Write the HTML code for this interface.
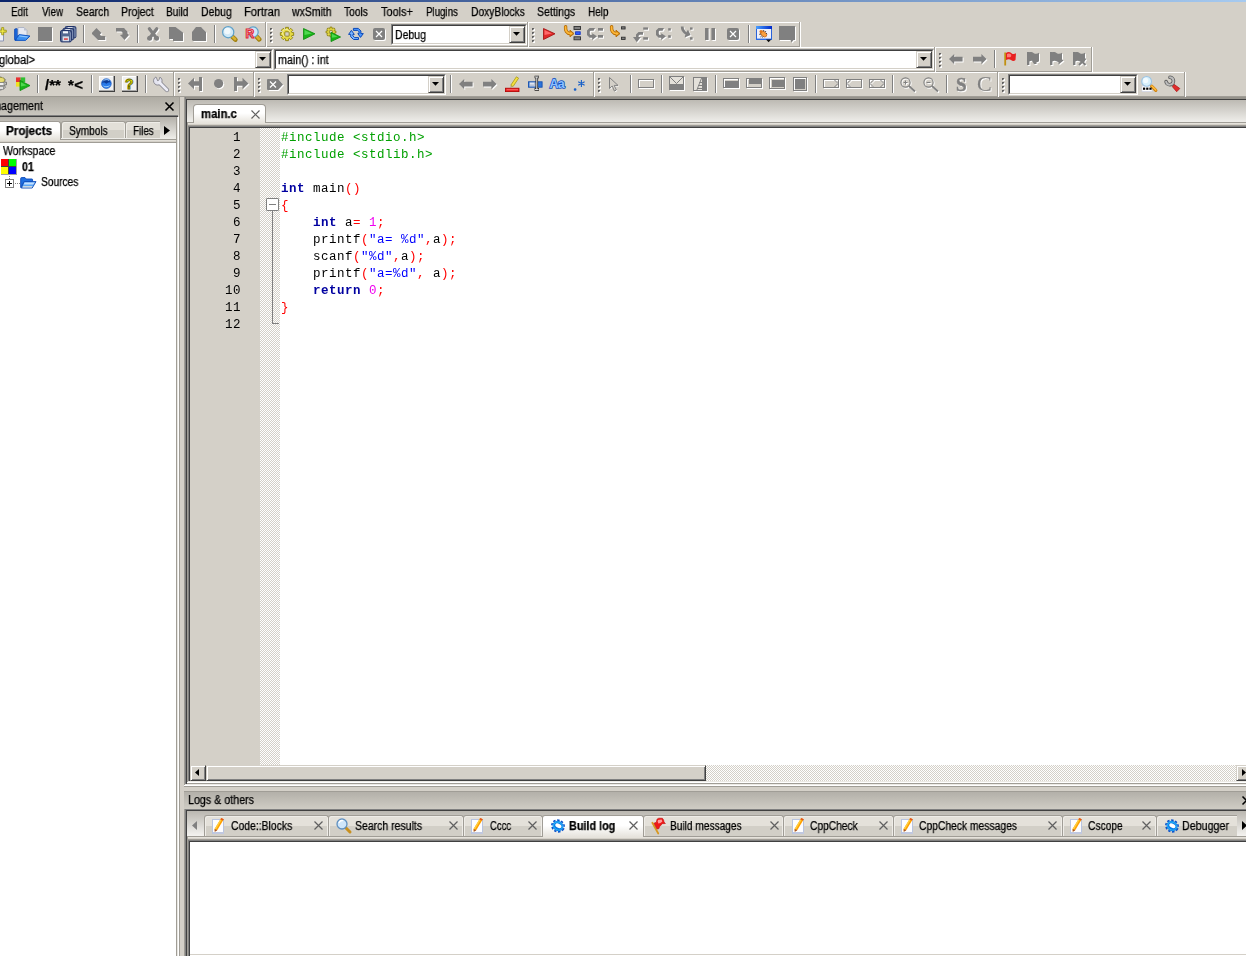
<!DOCTYPE html>
<html><head><meta charset="utf-8">
<style>
html,body{margin:0;padding:0;}
html{overflow:hidden;}
body{width:1246px;height:956px;overflow:hidden;background:#d4d0c8;position:relative;font-family:"Liberation Sans",sans-serif;font-size:11px;color:#000;}
.a{position:absolute;}
.t{-webkit-text-stroke:0.25px #000;will-change:transform;position:absolute;white-space:nowrap;line-height:13px;height:13px;}
.b{font-weight:bold;}
.sep{position:absolute;width:1px;height:20px;background:#808080;border-right:1px solid #fff;}
.grip{position:absolute;width:3px;height:16px;background:repeating-linear-gradient(to bottom,#808080 0,#808080 1px,#fff 1px,#fff 2px,#d4d0c8 2px,#d4d0c8 3px);}
.tbend{position:absolute;width:1px;background:#808080;border-right:1px solid #fff;}
.combo{position:absolute;background:#fff;border:2px solid;border-color:#404040 #d4d0c8 #d4d0c8 #404040;outline:1px solid;outline-color:#808080;box-sizing:border-box;}
.code{will-change:transform;position:absolute;left:281px;font-family:"Liberation Mono",monospace;font-size:12.5px;letter-spacing:0.5px;line-height:17px;height:17px;white-space:pre;}
.ln{will-change:transform;position:absolute;left:190px;width:51px;text-align:right;font-family:"Liberation Mono",monospace;font-size:12.5px;letter-spacing:0.5px;line-height:17px;height:17px;}
.g{color:#00a000}.k{color:#0000a0;font-weight:bold}.r{color:#ff0000}.s{color:#0000ff}.n{color:#f000f0}
svg{position:absolute;overflow:visible}
.sb{background:#d4d0c8;box-sizing:border-box;border:1px solid;border-color:#d4d0c8 #404040 #404040 #d4d0c8;box-shadow:inset 1px 1px 0 #fff,inset -1px -1px 0 #808080}
</style></head><body>

<!-- title bar bottom -->
<div class="a" style="left:0;top:0;width:1246px;height:2px;background:linear-gradient(to right,#0a246a,#a6caf0)"></div>

<!-- MENU -->
<div id="menu">
<span class="t" style="left:11.30px;top:6px;font-size:12px;transform-origin:0 0;transform:scaleX(0.820)">Edit</span>
<span class="t" style="left:41.90px;top:6px;font-size:12px;transform-origin:0 0;transform:scaleX(0.815)">View</span>
<span class="t" style="left:75.80px;top:6px;font-size:12px;transform-origin:0 0;transform:scaleX(0.873)">Search</span>
<span class="t" style="left:120.70px;top:6px;font-size:12px;transform-origin:0 0;transform:scaleX(0.876)">Project</span>
<span class="t" style="left:166.40px;top:6px;font-size:12px;transform-origin:0 0;transform:scaleX(0.838)">Build</span>
<span class="t" style="left:200.80px;top:6px;font-size:12px;transform-origin:0 0;transform:scaleX(0.871)">Debug</span>
<span class="t" style="left:243.50px;top:6px;font-size:12px;transform-origin:0 0;transform:scaleX(0.934)">Fortran</span>
<span class="t" style="left:292.37px;top:6px;font-size:12px;transform-origin:0 0;transform:scaleX(0.872)">wxSmith</span>
<span class="t" style="left:344.10px;top:6px;font-size:12px;transform-origin:0 0;transform:scaleX(0.850)">Tools</span>
<span class="t" style="left:381.00px;top:6px;font-size:12px;transform-origin:0 0;transform:scaleX(0.911)">Tools+</span>
<span class="t" style="left:426.00px;top:6px;font-size:12px;transform-origin:0 0;transform:scaleX(0.811)">Plugins</span>
<span class="t" style="left:470.50px;top:6px;font-size:12px;transform-origin:0 0;transform:scaleX(0.857)">DoxyBlocks</span>
<span class="t" style="left:537.00px;top:6px;font-size:12px;transform-origin:0 0;transform:scaleX(0.881)">Settings</span>
<span class="t" style="left:587.50px;top:6px;font-size:12px;transform-origin:0 0;transform:scaleX(0.828)">Help</span>
</div>

<!-- TOOLBAR ROW 1 placeholder -->
<div id="tb1">
<div class="a" style="left:0;top:22px;width:800px;height:1px;background:#fff"></div>
<div class="a" style="left:0;top:46px;width:800px;height:1px;background:#a09d96"></div>
<svg style="left:-10px;top:26px" width="17" height="16" viewBox="0 0 17 16"><path d="M2 2.5 L10 2.5 L13.5 6 L13.5 15 L2 15 Z" fill="#eef0f8" stroke="#8c96b4"/><path d="M11.7 1.6 h2 v2.6 h2.6 v2 h-2.6 v2.6 h-2 v-2.6 h-2.6 v-2 h2.6 z" fill="#f0e848" stroke="#98900c" stroke-width="0.8"/></svg>
<svg style="left:14px;top:26px" width="17" height="16" viewBox="0 0 17 16"><path d="M0.6 3.2 L2.2 2.6 L3.8 3.2 L3.8 13.6 L0.6 13.6 Z" fill="#1c66d8" stroke="#0c44b0" stroke-width="0.8"/><path d="M4 1.5 L10 1.5 L13 4.5 L13 9.5 L4 9.5 Z" fill="#e6e9f2" stroke="#a4acc0" stroke-width="0.8"/><path d="M10 1.5 L10 4.5 L13 4.5 Z" fill="#bcc2d0"/><path d="M1 14.4 L5.2 8.6 L16 10 L11.6 14.4 Z" fill="#3c90f0" stroke="#0c50c0" stroke-width="0.9" stroke-linejoin="round"/><path d="M5.6 9.4 L14 10.4 L13 11.4 L5 10.4 Z" fill="#90c8ff"/><path d="M0.6 13.6 L3.8 13.6 L1.2 14.4 Z" fill="#0c44b0"/></svg>
<svg style="left:38px;top:27px" width="16" height="16" viewBox="0 0 16 16"><rect x="1" y="1" width="14" height="14" fill="#fff"/><rect x="0" y="0" width="14" height="14" fill="#808080"/></svg>
<svg style="left:60px;top:26px" width="17" height="17" viewBox="0 0 17 17"><g transform="translate(4.6,0)"><rect x="0.5" y="0.5" width="10.8" height="11.4" rx="1.4" fill="#53678f" stroke="#22346a"/><rect x="3" y="1.2" width="5" height="2.2" fill="#f4f6fc"/><path d="M9 1.5 L10.4 2.6 L10.4 10.8" stroke="#8c9cc0" stroke-width="0.9" fill="none"/></g><g transform="translate(2.3,2)"><rect x="0.5" y="0.5" width="10.8" height="11.4" rx="1.4" fill="#53678f" stroke="#22346a"/><rect x="3" y="1.2" width="5" height="2.2" fill="#f4f6fc"/><path d="M9 1.5 L10.4 2.6 L10.4 10.8" stroke="#8c9cc0" stroke-width="0.9" fill="none"/></g><g transform="translate(0,4)"><rect x="0.5" y="0.5" width="10.8" height="11.4" rx="1.4" fill="#53678f" stroke="#22346a"/><rect x="3" y="1.2" width="5" height="2.2" fill="#f4f6fc"/><path d="M9 1.5 L10.4 2.6 L10.4 10.8" stroke="#8c9cc0" stroke-width="0.9" fill="none"/></g><rect x="2.6" y="10.4" width="6.4" height="4.8" fill="#d8dce8"/><rect x="4" y="12.4" width="3.8" height="1.3" fill="#e02020"/></svg>
<div class="a" style="left:83px;top:25px;width:1px;height:18px;background:#808080"></div><div class="a" style="left:84px;top:25px;width:1px;height:18px;background:#fff"></div>
<svg style="left:92px;top:28px" width="16" height="15" viewBox="0 0 16 15"><g transform="translate(1,1)" fill="#fff" stroke="#fff"><path d="M4.5 0 L9.6 5 L7.8 6.6 L9.2 8 L13.2 8 L13.2 12 L6 12 L0 6 L0 4.8 Z" stroke="none"/></g><g fill="#808080" stroke="#808080"><path d="M4.5 0 L9.6 5 L7.8 6.6 L9.2 8 L13.2 8 L13.2 12 L6 12 L0 6 L0 4.8 Z" stroke="none"/></g></svg>
<svg style="left:116px;top:28px" width="16" height="15" viewBox="0 0 16 15"><g transform="translate(1,1)" fill="#fff" stroke="#fff"><path d="M0 0 L8 0 L11.5 3.5 L11.5 5.5 L13 7 L8.5 12 L4 7 L6.5 6.5 L6.5 4.6 L5.4 3.5 L0 3.5 Z" stroke="none"/></g><g fill="#808080" stroke="#808080"><path d="M0 0 L8 0 L11.5 3.5 L11.5 5.5 L13 7 L8.5 12 L4 7 L6.5 6.5 L6.5 4.6 L5.4 3.5 L0 3.5 Z" stroke="none"/></g></svg>
<div class="a" style="left:137px;top:25px;width:1px;height:18px;background:#808080"></div><div class="a" style="left:138px;top:25px;width:1px;height:18px;background:#fff"></div>
<svg style="left:147px;top:27px" width="15" height="16" viewBox="0 0 15 16"><g transform="translate(1,1)" fill="#fff" stroke="#fff"><path d="M2.4 1.8 L9.8 11.5 M9.8 1.8 L2.4 11.5" stroke-width="3.3" stroke-linecap="round" fill="none"/><circle cx="2.6" cy="11.2" r="2.5" stroke="none"/><circle cx="9.6" cy="11.2" r="2.5" stroke="none"/></g><g fill="#808080" stroke="#808080"><path d="M2.4 1.8 L9.8 11.5 M9.8 1.8 L2.4 11.5" stroke-width="3.3" stroke-linecap="round" fill="none"/><circle cx="2.6" cy="11.2" r="2.5" stroke="none"/><circle cx="9.6" cy="11.2" r="2.5" stroke="none"/></g></svg>
<svg style="left:169px;top:27px" width="16" height="16" viewBox="0 0 16 16"><g transform="translate(1,1)" fill="#fff" stroke="#fff"><path d="M0 0 L6.5 0 L14 5.5 L14 14 L4 14 L4 12 L0 12 Z" stroke="none"/></g><g fill="#808080" stroke="#808080"><path d="M0 0 L6.5 0 L14 5.5 L14 14 L4 14 L4 12 L0 12 Z" stroke="none"/></g></svg>
<svg style="left:192px;top:27px" width="16" height="16" viewBox="0 0 16 16"><g transform="translate(1,1)" fill="#fff" stroke="#fff"><path d="M0 5 L4 0 L9 0 L14 5 L14 14 L1 14 L0 13 Z" stroke="none"/></g><g fill="#808080" stroke="#808080"><path d="M0 5 L4 0 L9 0 L14 5 L14 14 L1 14 L0 13 Z" stroke="none"/></g></svg>
<div class="a" style="left:214px;top:25px;width:1px;height:18px;background:#808080"></div><div class="a" style="left:215px;top:25px;width:1px;height:18px;background:#fff"></div>
<svg style="left:222px;top:26px" width="16" height="16" viewBox="0 0 16 16"><path d="M10.2 10.6 L13.4 13.6" stroke="#a08010" stroke-width="4.6" stroke-linecap="round"/><path d="M10.2 10.4 L13.2 13.2" stroke="#d8b030" stroke-width="2.6" stroke-linecap="round"/><circle cx="6.2" cy="6.2" r="5.6" fill="#d0e8f6" stroke="#5fa0c8" stroke-width="1.2"/><circle cx="5.4" cy="5" r="3.2" fill="#f0f8fc"/></svg>
<svg style="left:245px;top:26px" width="17" height="16" viewBox="0 0 17 16"><path d="M11.6 10.6 L14.2 13.4" stroke="#a08010" stroke-width="4.6" stroke-linecap="round"/><path d="M11.6 10.4 L14 13" stroke="#d8b030" stroke-width="2.6" stroke-linecap="round"/><circle cx="8" cy="6" r="5.2" fill="#d0e8f6" stroke="#5fa0c8" stroke-width="1.2"/><text x="0.6" y="11.6" font-family="Liberation Sans" font-weight="bold" font-size="12" fill="#ffd8d8" stroke="#e02838" stroke-width="1.1">R</text></svg>
<div class="a" style="left:265px;top:22px;width:1px;height:25px;background:#a09d96"></div><div class="a" style="left:266px;top:22px;width:1px;height:25px;background:#fff"></div>
<div class="a" style="left:271px;top:29px;width:2px;height:2px;background:#fff"></div><div class="a" style="left:270px;top:28px;width:2px;height:2px;background:#606060"></div><div class="a" style="left:271px;top:29px;width:1px;height:1px;background:#b0b0b0"></div><div class="a" style="left:271px;top:33px;width:2px;height:2px;background:#fff"></div><div class="a" style="left:270px;top:32px;width:2px;height:2px;background:#606060"></div><div class="a" style="left:271px;top:33px;width:1px;height:1px;background:#b0b0b0"></div><div class="a" style="left:271px;top:37px;width:2px;height:2px;background:#fff"></div><div class="a" style="left:270px;top:36px;width:2px;height:2px;background:#606060"></div><div class="a" style="left:271px;top:37px;width:1px;height:1px;background:#b0b0b0"></div><div class="a" style="left:271px;top:41px;width:2px;height:2px;background:#fff"></div><div class="a" style="left:270px;top:40px;width:2px;height:2px;background:#606060"></div><div class="a" style="left:271px;top:41px;width:1px;height:1px;background:#b0b0b0"></div>
<svg style="left:280px;top:27px" width="14" height="14" viewBox="0 0 14 14"><path d="M13.65 5.57 L13.65 8.43 L11.90 8.42 L11.47 9.46 L12.71 10.69 L10.69 12.71 L9.46 11.47 L8.42 11.90 L8.43 13.65 L5.57 13.65 L5.58 11.90 L4.54 11.47 L3.31 12.71 L1.29 10.69 L2.53 9.46 L2.10 8.42 L0.35 8.43 L0.35 5.57 L2.10 5.58 L2.53 4.54 L1.29 3.31 L3.31 1.29 L4.54 2.53 L5.58 2.10 L5.57 0.35 L8.43 0.35 L8.42 2.10 L9.46 2.53 L10.69 1.29 L12.71 3.31 L11.47 4.54 L11.90 5.58 Z" fill="#e6da44" stroke="#8c8010" stroke-width="0.9" stroke-linejoin="round"/><circle cx="6.0" cy="5.8" r="3.6" fill="none" stroke="#f6f0a0" stroke-width="1"/><rect x="4.8" y="4.8" width="4.4" height="4.4" rx="0.8" fill="#d4d0c8" stroke="#8c8010" stroke-width="0.9"/></svg>
<svg style="left:303px;top:28px" width="13" height="12" viewBox="0 0 13 12"><path d="M0.5 0.5 L12 5.8 L0.5 11.5 Z" fill="#18b418" stroke="#0c8c0c" stroke-width="0.8" stroke-linejoin="round"/><path d="M1.5 2 L9 5.6 L1.5 7 Z" fill="#50d850"/></svg>
<svg style="left:326px;top:27px" width="16" height="15" viewBox="0 0 16 15"><path d="M9.89 3.95 L9.89 6.05 L8.46 6.00 L8.15 6.73 L9.20 7.71 L7.71 9.20 L6.73 8.15 L6.00 8.46 L6.05 9.89 L3.95 9.89 L4.00 8.46 L3.27 8.15 L2.29 9.20 L0.80 7.71 L1.85 6.73 L1.54 6.00 L0.11 6.05 L0.11 3.95 L1.54 4.00 L1.85 3.27 L0.80 2.29 L2.29 0.80 L3.27 1.85 L4.00 1.54 L3.95 0.11 L6.05 0.11 L6.00 1.54 L6.73 1.85 L7.71 0.80 L9.20 2.29 L8.15 3.27 L8.46 4.00 Z" fill="#e6da44" stroke="#8c8010" stroke-width="0.9" stroke-linejoin="round"/><circle cx="5" cy="5" r="1.8" fill="#d4d0c8" stroke="#8c8010" stroke-width="0.8"/><path d="M5 5.2 L14.6 10 L5 14.6 Z" fill="#18b418" stroke="#0c8c0c" stroke-width="0.8" stroke-linejoin="round"/><path d="M5.8 6.8 L11.6 9.8 L5.8 10.8 Z" fill="#50d850"/></svg>
<svg style="left:348px;top:27px" width="16" height="13" viewBox="0 0 16 13"><path d="M5.4 1.4 L10.3 1.4 L12.9 4 L12.9 6.6 L15.3 6.6 L12.5 10.4 L9.8 6.6 L11 6.6 L11 4.8 L9.6 3.4 L5.4 3.4 Z" fill="#4c98ff" stroke="#0a48b8" stroke-width="1" stroke-linejoin="round"/><path d="M3.4 3.4 L6.3 7.4 L4.9 7.4 L4.9 8.8 L6.6 10.6 L10.5 10.6 L10.5 12.5 L5.6 12.5 L2.7 9.8 L2.7 7.4 L0.6 7.4 Z" fill="#78b4ff" stroke="#0a48b8" stroke-width="1" stroke-linejoin="round"/></svg>
<svg style="left:373px;top:28px" width="13" height="13" viewBox="0 0 13 13"><rect x="1" y="1" width="12" height="12" rx="2" fill="#fff"/><rect x="0" y="0" width="12" height="12" rx="2" fill="#808080"/><path d="M3 3 L9 9 M9 3 L3 9" stroke="#fff" stroke-width="1.2"/></svg>
<div class="a" style="left:391px;top:24px;width:136px;height:21px;box-sizing:border-box;background:#fff;border:1px solid;border-color:#808080 #fff #fff #808080"></div><div class="a" style="left:392px;top:25px;width:134px;height:19px;box-sizing:border-box;background:#fff;border:1px solid;border-color:#404040 #d4d0c8 #d4d0c8 #404040"></div><div class="a sb" style="left:509px;top:26px;width:16px;height:17px"></div><svg style="left:513px;top:32px" width="7" height="4" viewBox="0 0 7 4"><path d="M0 0 L7 0 L3.5 3.8 Z" fill="#000"/></svg><span class="t" style="left:394.60px;top:29px;font-size:12px;transform-origin:0 0;transform:scaleX(0.876)">Debug</span>
<div class="a" style="left:527px;top:22px;width:1px;height:25px;background:#a09d96"></div><div class="a" style="left:528px;top:22px;width:1px;height:25px;background:#fff"></div>
<div class="a" style="left:533px;top:29px;width:2px;height:2px;background:#fff"></div><div class="a" style="left:532px;top:28px;width:2px;height:2px;background:#606060"></div><div class="a" style="left:533px;top:29px;width:1px;height:1px;background:#b0b0b0"></div><div class="a" style="left:533px;top:33px;width:2px;height:2px;background:#fff"></div><div class="a" style="left:532px;top:32px;width:2px;height:2px;background:#606060"></div><div class="a" style="left:533px;top:33px;width:1px;height:1px;background:#b0b0b0"></div><div class="a" style="left:533px;top:37px;width:2px;height:2px;background:#fff"></div><div class="a" style="left:532px;top:36px;width:2px;height:2px;background:#606060"></div><div class="a" style="left:533px;top:37px;width:1px;height:1px;background:#b0b0b0"></div><div class="a" style="left:533px;top:41px;width:2px;height:2px;background:#fff"></div><div class="a" style="left:532px;top:40px;width:2px;height:2px;background:#606060"></div><div class="a" style="left:533px;top:41px;width:1px;height:1px;background:#b0b0b0"></div>
<svg style="left:543px;top:28px" width="13" height="12" viewBox="0 0 13 12"><path d="M0.5 0.5 L12 5.8 L0.5 11.5 Z" fill="#e02828" stroke="#a00c0c" stroke-width="0.8" stroke-linejoin="round"/><path d="M1.5 2 L9 5.6 L1.5 7 Z" fill="#ff6868"/></svg>
<svg style="left:564px;top:26px" width="17" height="15" viewBox="0 0 17 15"><path d="M1.6 0.6 C1.2 4.6 2.6 7.4 6.6 7.6" fill="none" stroke="#b87008" stroke-width="3.4" stroke-linecap="round"/><path d="M6 4.2 L10 7.6 L6 10.8 Z" fill="#b87008" stroke="#b87008" stroke-width="1" stroke-linejoin="round"/><path d="M1.6 0.8 C1.2 4.6 2.6 7.4 6.6 7.6" fill="none" stroke="#ffb838" stroke-width="1.7" stroke-linecap="round"/><path d="M6.4 5.6 L8.8 7.6 L6.4 9.4 Z" fill="#ffb838"/><rect x="10" y="0.5" width="6.5" height="3" fill="#808080" stroke="#303030" stroke-width="0.9"/><rect x="11.6" y="5.8" width="4.6" height="2.6" fill="#3060ff" stroke="#1030c0" stroke-width="0.9"/><rect x="10" y="10.8" width="6.5" height="3" fill="#808080" stroke="#303030" stroke-width="0.9"/></svg>
<svg style="left:587px;top:28px" width="18" height="15" viewBox="0 0 18 15"><g transform="translate(1,1)" fill="#fff" stroke="#fff"><path d="M8 0 L2.5 0 L0 2.5 L0 7 L2.5 9.8 L5.2 9.8 L5.2 12 L10 8.3 L5.2 5.2 L5.2 7 L3.6 7 L2.8 6 L2.8 3.6 L3.6 2.7 L6.6 2.7 Z" stroke="none"/><rect x="11" y="0" width="5" height="2.7" stroke="none"/><rect x="11" y="7" width="5" height="2.7" stroke="none"/></g><g fill="#808080" stroke="#808080"><path d="M8 0 L2.5 0 L0 2.5 L0 7 L2.5 9.8 L5.2 9.8 L5.2 12 L10 8.3 L5.2 5.2 L5.2 7 L3.6 7 L2.8 6 L2.8 3.6 L3.6 2.7 L6.6 2.7 Z" stroke="none"/><rect x="11" y="0" width="5" height="2.7" stroke="none"/><rect x="11" y="7" width="5" height="2.7" stroke="none"/></g></svg>
<svg style="left:610px;top:26px" width="16" height="15" viewBox="0 0 16 15"><path d="M1.6 0.6 C1.2 4.6 2.6 7.4 6.6 7.6" fill="none" stroke="#b87008" stroke-width="3.4" stroke-linecap="round"/><path d="M6 4.2 L10 7.6 L6 10.8 Z" fill="#b87008" stroke="#b87008" stroke-width="1" stroke-linejoin="round"/><path d="M1.6 0.8 C1.2 4.6 2.6 7.4 6.6 7.6" fill="none" stroke="#ffb838" stroke-width="1.7" stroke-linecap="round"/><path d="M6.4 5.6 L8.8 7.6 L6.4 9.4 Z" fill="#ffb838"/><rect x="11.5" y="0.8" width="3.6" height="2.2" fill="#808080" stroke="#303030" stroke-width="0.9"/><rect x="11.5" y="11.2" width="3.6" height="2.2" fill="#808080" stroke="#303030" stroke-width="0.9"/></svg>
<svg style="left:633px;top:27px" width="18" height="17" viewBox="0 0 18 17"><g transform="translate(1,1)" fill="#fff" stroke="#fff"><path d="M10 5 L5.5 5 L3 7.5 L3 10 L0 10 L3.8 15.2 L7.8 10 L5.6 10 L5.6 8.8 L6.8 7.7 L10 7.7 Z" stroke="none"/><rect x="10.2" y="0.4" width="4.8" height="2.3" stroke="none"/><rect x="10.2" y="10.2" width="4.8" height="2.5" stroke="none"/></g><g fill="#808080" stroke="#808080"><path d="M10 5 L5.5 5 L3 7.5 L3 10 L0 10 L3.8 15.2 L7.8 10 L5.6 10 L5.6 8.8 L6.8 7.7 L10 7.7 Z" stroke="none"/><rect x="10.2" y="0.4" width="4.8" height="2.3" stroke="none"/><rect x="10.2" y="10.2" width="4.8" height="2.5" stroke="none"/></g></svg>
<svg style="left:656px;top:28px" width="17" height="14" viewBox="0 0 17 14"><g transform="translate(1,1)" fill="#fff" stroke="#fff"><path d="M8 0 L2.5 0 L0 2.5 L0 7 L2.5 9.8 L5.2 9.8 L5.2 12 L10 8.3 L5.2 5.2 L5.2 7 L3.6 7 L2.8 6 L2.8 3.6 L3.6 2.7 L6.6 2.7 Z" stroke="none"/><rect x="12.2" y="0.2" width="2.6" height="2.4" stroke="none"/><rect x="12.2" y="7.2" width="2.6" height="2.6" stroke="none"/></g><g fill="#808080" stroke="#808080"><path d="M8 0 L2.5 0 L0 2.5 L0 7 L2.5 9.8 L5.2 9.8 L5.2 12 L10 8.3 L5.2 5.2 L5.2 7 L3.6 7 L2.8 6 L2.8 3.6 L3.6 2.7 L6.6 2.7 Z" stroke="none"/><rect x="12.2" y="0.2" width="2.6" height="2.4" stroke="none"/><rect x="12.2" y="7.2" width="2.6" height="2.6" stroke="none"/></g></svg>
<svg style="left:680px;top:26px" width="16" height="15" viewBox="0 0 16 15"><g transform="translate(1,1)" fill="#fff" stroke="#fff"><path d="M2.2 0.6 C2.2 4 3.6 6 6.2 7.6" fill="none" stroke-width="2.8"/><path d="M8 3.8 L10.6 9 L4.6 11.4 L5.6 7.4 Z" stroke="none"/><rect x="10" y="1.4" width="2.6" height="2.3" stroke="none"/><rect x="10" y="11.2" width="2.6" height="2.5" stroke="none"/></g><g fill="#808080" stroke="#808080"><path d="M2.2 0.6 C2.2 4 3.6 6 6.2 7.6" fill="none" stroke-width="2.8"/><path d="M8 3.8 L10.6 9 L4.6 11.4 L5.6 7.4 Z" stroke="none"/><rect x="10" y="1.4" width="2.6" height="2.3" stroke="none"/><rect x="10" y="11.2" width="2.6" height="2.5" stroke="none"/></g></svg>
<svg style="left:705px;top:28px" width="12" height="13" viewBox="0 0 12 13"><g transform="translate(1,1)" fill="#fff" stroke="#fff"><rect x="0" y="0" width="3.6" height="12" stroke="none"/><rect x="6.4" y="0" width="3.6" height="12" stroke="none"/></g><g fill="#808080" stroke="#808080"><rect x="0" y="0" width="3.6" height="12" stroke="none"/><rect x="6.4" y="0" width="3.6" height="12" stroke="none"/></g></svg>
<svg style="left:727px;top:28px" width="13" height="13" viewBox="0 0 13 13"><rect x="1" y="1" width="12" height="12" rx="2" fill="#fff"/><rect x="0" y="0" width="12" height="12" rx="2" fill="#808080"/><path d="M3 3 L9 9 M9 3 L3 9" stroke="#fff" stroke-width="1.2"/></svg>
<div class="a" style="left:748px;top:25px;width:1px;height:18px;background:#808080"></div><div class="a" style="left:749px;top:25px;width:1px;height:18px;background:#fff"></div>
<svg style="left:756px;top:26px" width="17" height="18" viewBox="0 0 17 18"><defs><linearGradient id="dwg" x1="0" y1="0" x2="1" y2="0"><stop offset="0" stop-color="#4aa0ff"/><stop offset="1" stop-color="#0028c8"/></linearGradient></defs><rect x="0.5" y="0.5" width="15" height="13" fill="#eef0fa" stroke="#2a62d8"/><rect x="0" y="0" width="16" height="3" fill="url(#dwg)"/><rect x="0" y="12.6" width="16" height="1.4" fill="#2a6ce8"/><ellipse cx="7.6" cy="8" rx="3.6" ry="2.3" transform="rotate(40 7.6 8)" fill="#f8a040" stroke="#c86010" stroke-width="0.7"/><circle cx="5" cy="5.4" r="1.5" fill="#e07818"/><path d="M3.2 8.4 L5.2 8 M4.4 11 L5.8 9.8 M6.4 11.6 L7 10.4 M7.6 4 L7.8 5.4 M9.8 5 L9.4 6 M11 7.4 L10 7.6" stroke="#303030" stroke-width="0.8"/><path d="M10 13.6 L15.2 13.6 L12.6 16.2 Z" fill="#101010"/></svg>
<svg style="left:779px;top:26px" width="18" height="18" viewBox="0 0 18 18"><path d="M1 1 H17 V15 H15.5 L13.5 17.5 L12.5 15 H1 Z" fill="#fff"/><path d="M0 0 H16 V14 H14.5 L12.5 16.5 L11.5 14 H0 Z" fill="#808080"/></svg>
<div class="a" style="left:799px;top:22px;width:1px;height:25px;background:#a09d96"></div><div class="a" style="left:800px;top:22px;width:1px;height:25px;background:#fff"></div>
</div>
<!-- TOOLBAR ROW 2 placeholder -->
<div id="tb2">
<div class="a" style="left:-20px;top:49px;width:293px;height:21px;box-sizing:border-box;background:#fff;border:1px solid;border-color:#808080 #fff #fff #808080"></div><div class="a" style="left:-19px;top:50px;width:291px;height:19px;box-sizing:border-box;background:#fff;border:1px solid;border-color:#404040 #d4d0c8 #d4d0c8 #404040"></div><div class="a sb" style="left:255px;top:51px;width:16px;height:17px"></div><svg style="left:259px;top:57px" width="7" height="4" viewBox="0 0 7 4"><path d="M0 0 L7 0 L3.5 3.8 Z" fill="#000"/></svg>
<span class="t" style="left:-1.00px;top:54px;font-size:12px;transform-origin:0 0;transform:scaleX(0.925)">global&gt;</span>
<div class="a" style="left:274px;top:49px;width:660px;height:21px;box-sizing:border-box;background:#fff;border:1px solid;border-color:#808080 #fff #fff #808080"></div><div class="a" style="left:275px;top:50px;width:658px;height:19px;box-sizing:border-box;background:#fff;border:1px solid;border-color:#404040 #d4d0c8 #d4d0c8 #404040"></div><div class="a sb" style="left:916px;top:51px;width:16px;height:17px"></div><svg style="left:920px;top:57px" width="7" height="4" viewBox="0 0 7 4"><path d="M0 0 L7 0 L3.5 3.8 Z" fill="#000"/></svg>
<span class="t" style="left:277.70px;top:54px;font-size:12px;transform-origin:0 0;transform:scaleX(0.895)">main() : int</span>
<div class="a" style="left:0;top:47px;width:1092px;height:1px;background:#fff"></div>
<div class="a" style="left:0;top:71px;width:1092px;height:1px;background:#a09d96"></div>
<div class="a" style="left:934px;top:47px;width:1px;height:25px;background:#a09d96"></div><div class="a" style="left:935px;top:47px;width:1px;height:25px;background:#fff"></div>
<div class="a" style="left:940px;top:54px;width:2px;height:2px;background:#fff"></div><div class="a" style="left:939px;top:53px;width:2px;height:2px;background:#606060"></div><div class="a" style="left:940px;top:54px;width:1px;height:1px;background:#b0b0b0"></div><div class="a" style="left:940px;top:58px;width:2px;height:2px;background:#fff"></div><div class="a" style="left:939px;top:57px;width:2px;height:2px;background:#606060"></div><div class="a" style="left:940px;top:58px;width:1px;height:1px;background:#b0b0b0"></div><div class="a" style="left:940px;top:62px;width:2px;height:2px;background:#fff"></div><div class="a" style="left:939px;top:61px;width:2px;height:2px;background:#606060"></div><div class="a" style="left:940px;top:62px;width:1px;height:1px;background:#b0b0b0"></div><div class="a" style="left:940px;top:66px;width:2px;height:2px;background:#fff"></div><div class="a" style="left:939px;top:65px;width:2px;height:2px;background:#606060"></div><div class="a" style="left:940px;top:66px;width:1px;height:1px;background:#b0b0b0"></div>
<svg style="left:949px;top:54px" width="16" height="12" viewBox="0 0 16 12"><g transform="translate(1,1)" fill="#fff" stroke="#fff"><path d="M0 5 L5.2 0 L5.2 2.8 L13.6 2.8 L13.6 7.4 L5.2 7.4 L5.2 10.2 Z" stroke="none"/></g><g fill="#808080" stroke="#808080"><path d="M0 5 L5.2 0 L5.2 2.8 L13.6 2.8 L13.6 7.4 L5.2 7.4 L5.2 10.2 Z" stroke="none"/></g></svg>
<svg style="left:973px;top:54px" width="16" height="12" viewBox="0 0 16 12"><g transform="translate(1,1)" fill="#fff" stroke="#fff"><path d="M13.6 5 L8.4 0 L8.4 2.8 L0 2.8 L0 7.4 L8.4 7.4 L8.4 10.2 Z" stroke="none"/></g><g fill="#808080" stroke="#808080"><path d="M13.6 5 L8.4 0 L8.4 2.8 L0 2.8 L0 7.4 L8.4 7.4 L8.4 10.2 Z" stroke="none"/></g></svg>
<div class="a" style="left:994px;top:50px;width:1px;height:18px;background:#808080"></div><div class="a" style="left:995px;top:50px;width:1px;height:18px;background:#fff"></div>
<svg style="left:1004px;top:52px" width="13" height="14" viewBox="0 0 13 14"><rect x="0.3" y="0.5" width="1.8" height="13" fill="#c09010"/><path d="M2 1 C4 -0.5 6 0 7.5 1.2 C9 2.4 10.5 2.2 12 1.2 L11.5 8 C10 9.4 8.5 9.2 7 8 C5.5 7 4 7 2 8 Z" fill="#e82020"/><path d="M3 2 C4.5 1 6 1.4 7 2.4 C7.6 3.2 7 5 6 5.2 C5 5.4 4 5 3 5.6 Z" fill="#ff7878"/></svg>
<svg style="left:1027px;top:52px" width="15" height="15" viewBox="0 0 15 15"><g transform="translate(1,1)" fill="#fff" stroke="#fff"><rect x="0" y="0" width="2.4" height="13" stroke="none"/><path d="M2 0.2 C4 -0.4 5.5 0.2 7 1.2 C8.5 2.2 10.5 1.8 12 0.8 L12 9.2 C10.5 10.4 8.5 10.4 7 9.4 C5.5 8.4 4 8.4 2 9.4 Z" stroke="none"/><path d="M5 9 L9.5 9 L9.5 12 L7 12 Z" stroke="none"/></g><g fill="#808080" stroke="#808080"><rect x="0" y="0" width="2.4" height="13" stroke="none"/><path d="M2 0.2 C4 -0.4 5.5 0.2 7 1.2 C8.5 2.2 10.5 1.8 12 0.8 L12 9.2 C10.5 10.4 8.5 10.4 7 9.4 C5.5 8.4 4 8.4 2 9.4 Z" stroke="none"/><path d="M5 9 L9.5 9 L9.5 12 L7 12 Z" stroke="none"/></g></svg>
<svg style="left:1050px;top:52px" width="15" height="15" viewBox="0 0 15 15"><g transform="translate(1,1)" fill="#fff" stroke="#fff"><rect x="0" y="0" width="2.4" height="13" stroke="none"/><path d="M2 0.2 C4 -0.4 5.5 0.2 7 1.2 C8.5 2.2 10.5 1.8 12 0.8 L12 9.2 C10.5 10.4 8.5 10.4 7 9.4 C5.5 8.4 4 8.4 2 9.4 Z" stroke="none"/><path d="M8.5 4.5 L13.5 8.5 L8.5 12.5 Z" stroke="none"/></g><g fill="#808080" stroke="#808080"><rect x="0" y="0" width="2.4" height="13" stroke="none"/><path d="M2 0.2 C4 -0.4 5.5 0.2 7 1.2 C8.5 2.2 10.5 1.8 12 0.8 L12 9.2 C10.5 10.4 8.5 10.4 7 9.4 C5.5 8.4 4 8.4 2 9.4 Z" stroke="none"/><path d="M8.5 4.5 L13.5 8.5 L8.5 12.5 Z" stroke="none"/></g></svg>
<svg style="left:1073px;top:52px" width="15" height="15" viewBox="0 0 15 15"><g transform="translate(1,1)" fill="#fff" stroke="#fff"><rect x="0" y="0" width="2.4" height="13" stroke="none"/><path d="M2 0.2 C4 -0.4 5.5 0.2 7 1.2 C8.5 2.2 10.5 1.8 12 0.8 L12 9.2 C10.5 10.4 8.5 10.4 7 9.4 C5.5 8.4 4 8.4 2 9.4 Z" stroke="none"/><path d="M6 6.5 L12.5 13 M12.5 6.5 L6 13" stroke-width="2" fill="none"/></g><g fill="#808080" stroke="#808080"><rect x="0" y="0" width="2.4" height="13" stroke="none"/><path d="M2 0.2 C4 -0.4 5.5 0.2 7 1.2 C8.5 2.2 10.5 1.8 12 0.8 L12 9.2 C10.5 10.4 8.5 10.4 7 9.4 C5.5 8.4 4 8.4 2 9.4 Z" stroke="none"/><path d="M6 6.5 L12.5 13 M12.5 6.5 L6 13" stroke-width="2" fill="none"/></g></svg>
<div class="a" style="left:1091px;top:47px;width:1px;height:25px;background:#a09d96"></div><div class="a" style="left:1092px;top:47px;width:1px;height:25px;background:#fff"></div>
</div>
<!-- TOOLBAR ROW 3 placeholder -->
<div id="tb3">
<div class="a" style="left:0;top:72px;width:1185px;height:1px;background:#fff"></div>
<div class="a" style="left:0;top:96px;width:1246px;height:1px;background:#a09d96"></div>
<svg style="left:-9px;top:77px" width="16" height="14" viewBox="0 0 16 14"><path d="M15.45 5.11 L15.45 7.89 L13.80 7.89 L13.38 8.91 L14.54 10.08 L12.58 12.04 L11.41 10.88 L10.39 11.30 L10.39 12.95 L7.61 12.95 L7.61 11.30 L6.59 10.88 L5.42 12.04 L3.46 10.08 L4.62 8.91 L4.20 7.89 L2.55 7.89 L2.55 5.11 L4.20 5.11 L4.62 4.09 L3.46 2.92 L5.42 0.96 L6.59 2.12 L7.61 1.70 L7.61 0.05 L10.39 0.05 L10.39 1.70 L11.41 2.12 L12.58 0.96 L14.54 2.92 L13.38 4.09 L13.80 5.11 Z" fill="#c8c8c0" stroke="#707070" stroke-width="0.9"/><ellipse cx="9" cy="3" rx="4.5" ry="2.6" fill="#e8dc70" stroke="#908820" stroke-width="0.6"/><rect x="6" y="5.5" width="7" height="3" fill="#f0f0f0" stroke="#606060" stroke-width="0.6"/><rect x="6.5" y="9.5" width="6" height="3" fill="#e0e0e0" stroke="#707070" stroke-width="0.6"/></svg>
<svg style="left:16px;top:77px" width="15" height="14" viewBox="0 0 15 14"><rect x="0" y="0.4" width="4.6" height="4.6" fill="#e83030"/><rect x="4.6" y="0.4" width="4.6" height="4.6" fill="#30c030"/><rect x="0" y="5" width="4.6" height="4.6" fill="#f0e020"/><path d="M4 3.4 L14 8.6 L4 13.6 Z" fill="#18b418" stroke="#0c8c0c" stroke-width="0.8" stroke-linejoin="round"/><path d="M4.9 5.2 L10.6 8.3 L4.9 9.4 Z" fill="#50d850"/></svg>
<div class="a" style="left:37px;top:75px;width:1px;height:18px;background:#808080"></div><div class="a" style="left:38px;top:75px;width:1px;height:18px;background:#fff"></div>
<span class="t b" style="left:45px;top:77px;font-size:15px;line-height:15px;height:15px;letter-spacing:0px">/**</span>
<span class="t b" style="left:68px;top:77px;font-size:15px;line-height:15px;height:15px;letter-spacing:0.5px">*&lt;</span>
<div class="a" style="left:91px;top:75px;width:1px;height:18px;background:#808080"></div><div class="a" style="left:92px;top:75px;width:1px;height:18px;background:#fff"></div>
<svg style="left:99px;top:76px" width="16" height="16" viewBox="0 0 16 16"><rect x="0" y="0" width="16" height="16" fill="#404040"/><rect x="0" y="0" width="15" height="15" fill="#a8a8a8"/><rect x="0" y="0" width="14" height="14" fill="#fff"/><rect x="1" y="1" width="13" height="13" fill="#f0f0f0"/><circle cx="7.4" cy="7.6" r="4.9" fill="#2a7ae8" stroke="#1450b8" stroke-width="0.6"/><path d="M3 7.4 C4.4 5.6 6 6.6 7.4 7.8 C8.8 6.4 10.4 5.8 11.8 7 C10.8 4 6.8 2.4 4 4.6 Z" fill="#0c3c98"/><path d="M3.4 9 C5 10.6 9.6 10.8 11.6 8.8 C10.4 11.8 5.4 12.4 3.4 9 Z" fill="#9cd0ff"/><path d="M4.4 4.8 C5.8 3.4 8.6 3.2 10 4.4" stroke="#b8dcff" stroke-width="0.9" fill="none"/></svg>
<svg style="left:122px;top:76px" width="16" height="16" viewBox="0 0 16 16"><rect x="0" y="0" width="16" height="16" fill="#404040"/><rect x="0" y="0" width="15" height="15" fill="#a8a8a8"/><rect x="0" y="0" width="14" height="14" fill="#fff"/><rect x="1" y="1" width="13" height="13" fill="#f0f0f0"/><text x="3" y="12.6" font-family="Liberation Sans" font-weight="bold" font-size="14" fill="#f4f000" stroke="#686800" stroke-width="0.9">?</text></svg>
<div class="a" style="left:145px;top:75px;width:1px;height:18px;background:#808080"></div><div class="a" style="left:146px;top:75px;width:1px;height:18px;background:#fff"></div>
<svg style="left:153px;top:76px" width="17" height="17" viewBox="0 0 17 17"><path d="M6.5 6.5 L14 14" stroke="#8c8c94" stroke-width="4.4" stroke-linecap="round"/><circle cx="4.8" cy="4.8" r="4.3" fill="#e4e4f0" stroke="#8c8c94" stroke-width="1"/><path d="M6.5 6.5 L14 14" stroke="#ececf6" stroke-width="2.6" stroke-linecap="round"/><path d="M4.8 5.2 L2.4 0 L7.4 0 L6.6 3 Z" fill="#d4d0c8"/><path d="M3 0.9 L4.8 5 L6.4 3.2 L6.9 1" fill="none" stroke="#8c8c94" stroke-width="0.9"/></svg>
<div class="a" style="left:173px;top:72px;width:1px;height:25px;background:#a09d96"></div><div class="a" style="left:174px;top:72px;width:1px;height:25px;background:#fff"></div>
<div class="a" style="left:179px;top:79px;width:2px;height:2px;background:#fff"></div><div class="a" style="left:178px;top:78px;width:2px;height:2px;background:#606060"></div><div class="a" style="left:179px;top:79px;width:1px;height:1px;background:#b0b0b0"></div><div class="a" style="left:179px;top:83px;width:2px;height:2px;background:#fff"></div><div class="a" style="left:178px;top:82px;width:2px;height:2px;background:#606060"></div><div class="a" style="left:179px;top:83px;width:1px;height:1px;background:#b0b0b0"></div><div class="a" style="left:179px;top:87px;width:2px;height:2px;background:#fff"></div><div class="a" style="left:178px;top:86px;width:2px;height:2px;background:#606060"></div><div class="a" style="left:179px;top:87px;width:1px;height:1px;background:#b0b0b0"></div><div class="a" style="left:179px;top:91px;width:2px;height:2px;background:#fff"></div><div class="a" style="left:178px;top:90px;width:2px;height:2px;background:#606060"></div><div class="a" style="left:179px;top:91px;width:1px;height:1px;background:#b0b0b0"></div>
<svg style="left:188px;top:77px" width="16" height="15" viewBox="0 0 16 15"><g transform="translate(1,1)" fill="#fff" stroke="#fff"><path d="M0 6.5 L6 0.8 L6 4.2 L11 4.2 L11 8.8 L6 8.8 L6 12.2 Z" stroke="none"/><rect x="11" y="0" width="3" height="14" stroke="none"/></g><g fill="#808080" stroke="#808080"><path d="M0 6.5 L6 0.8 L6 4.2 L11 4.2 L11 8.8 L6 8.8 L6 12.2 Z" stroke="none"/><rect x="11" y="0" width="3" height="14" stroke="none"/></g></svg>
<svg style="left:214px;top:79px" width="11" height="11" viewBox="0 0 11 11"><g transform="translate(1,1)" fill="#fff" stroke="#fff"><circle cx="4.6" cy="4.6" r="4.6" stroke="none"/></g><g fill="#808080" stroke="#808080"><circle cx="4.6" cy="4.6" r="4.6" stroke="none"/></g></svg>
<svg style="left:234px;top:77px" width="16" height="15" viewBox="0 0 16 15"><g transform="translate(1,1)" fill="#fff" stroke="#fff"><path d="M14.5 6.5 L8.5 0.8 L8.5 4.2 L3 4.2 L3 8.8 L8.5 8.8 L8.5 12.2 Z" stroke="none"/><rect x="0" y="0" width="3" height="14" stroke="none"/></g><g fill="#808080" stroke="#808080"><path d="M14.5 6.5 L8.5 0.8 L8.5 4.2 L3 4.2 L3 8.8 L8.5 8.8 L8.5 12.2 Z" stroke="none"/><rect x="0" y="0" width="3" height="14" stroke="none"/></g></svg>
<div class="a" style="left:253px;top:72px;width:1px;height:25px;background:#a09d96"></div><div class="a" style="left:254px;top:72px;width:1px;height:25px;background:#fff"></div>
<div class="a" style="left:259px;top:79px;width:2px;height:2px;background:#fff"></div><div class="a" style="left:258px;top:78px;width:2px;height:2px;background:#606060"></div><div class="a" style="left:259px;top:79px;width:1px;height:1px;background:#b0b0b0"></div><div class="a" style="left:259px;top:83px;width:2px;height:2px;background:#fff"></div><div class="a" style="left:258px;top:82px;width:2px;height:2px;background:#606060"></div><div class="a" style="left:259px;top:83px;width:1px;height:1px;background:#b0b0b0"></div><div class="a" style="left:259px;top:87px;width:2px;height:2px;background:#fff"></div><div class="a" style="left:258px;top:86px;width:2px;height:2px;background:#606060"></div><div class="a" style="left:259px;top:87px;width:1px;height:1px;background:#b0b0b0"></div><div class="a" style="left:259px;top:91px;width:2px;height:2px;background:#fff"></div><div class="a" style="left:258px;top:90px;width:2px;height:2px;background:#606060"></div><div class="a" style="left:259px;top:91px;width:1px;height:1px;background:#b0b0b0"></div>
<svg style="left:267px;top:79px" width="17" height="13" viewBox="0 0 17 13"><path d="M2 1 H12 L17 6.5 L12 12 H2 Z" fill="#fff"/><path d="M1 0 H11 L16 5.5 L11 11 H1 Q0 11 0 10 V1 Q0 0 1 0 Z" fill="#808080"/><path d="M3 2.5 L9 8.5 M9 2.5 L3 8.5" stroke="#fff" stroke-width="1.2"/></svg>
<div class="a" style="left:287px;top:74px;width:159px;height:21px;box-sizing:border-box;background:#fff;border:1px solid;border-color:#808080 #fff #fff #808080"></div><div class="a" style="left:288px;top:75px;width:157px;height:19px;box-sizing:border-box;background:#fff;border:1px solid;border-color:#404040 #d4d0c8 #d4d0c8 #404040"></div><div class="a sb" style="left:428px;top:76px;width:16px;height:17px"></div><svg style="left:432px;top:82px" width="7" height="4" viewBox="0 0 7 4"><path d="M0 0 L7 0 L3.5 3.8 Z" fill="#000"/></svg>
<div class="a" style="left:450px;top:75px;width:1px;height:18px;background:#808080"></div><div class="a" style="left:451px;top:75px;width:1px;height:18px;background:#fff"></div>
<svg style="left:459px;top:79px" width="16" height="12" viewBox="0 0 16 12"><g transform="translate(1,1)" fill="#fff" stroke="#fff"><path d="M0 5 L5.2 0 L5.2 2.8 L13.6 2.8 L13.6 7.4 L5.2 7.4 L5.2 10.2 Z" stroke="none"/></g><g fill="#808080" stroke="#808080"><path d="M0 5 L5.2 0 L5.2 2.8 L13.6 2.8 L13.6 7.4 L5.2 7.4 L5.2 10.2 Z" stroke="none"/></g></svg>
<svg style="left:483px;top:79px" width="16" height="12" viewBox="0 0 16 12"><g transform="translate(1,1)" fill="#fff" stroke="#fff"><path d="M13.6 5 L8.4 0 L8.4 2.8 L0 2.8 L0 7.4 L8.4 7.4 L8.4 10.2 Z" stroke="none"/></g><g fill="#808080" stroke="#808080"><path d="M13.6 5 L8.4 0 L8.4 2.8 L0 2.8 L0 7.4 L8.4 7.4 L8.4 10.2 Z" stroke="none"/></g></svg>
<svg style="left:505px;top:76px" width="15" height="16" viewBox="0 0 15 16"><path d="M11.4 0.8 L13.6 2.2 L8 10.6 L5.8 9.2 Z" fill="#f4e040" stroke="#a89810" stroke-width="0.8" stroke-linejoin="round"/><path d="M5.8 9.2 L8 10.6 L5.4 11.8 Z" fill="#b8a868"/><rect x="0.5" y="12.2" width="13.5" height="3.4" fill="#ec2020" stroke="#b00000" stroke-width="0.8"/><rect x="1.6" y="13.2" width="11.4" height="1" fill="#ff6868"/></svg>
<svg style="left:528px;top:76px" width="15" height="15" viewBox="0 0 15 15"><rect x="0.5" y="5.8" width="13.6" height="5.4" fill="#2c74dc" stroke="#1450b0" stroke-width="0.9"/><rect x="1.4" y="6.4" width="7" height="4.2" fill="#b8c4d8"/><rect x="2" y="6.8" width="4" height="1.6" fill="#e0e6f0"/><path d="M6.6 1 H11 M6.6 13.4 H11 M8.8 1 V13.4" stroke="#202020" stroke-width="2.6" fill="none"/><path d="M7 1 H10.6 M7 13.4 H10.6 M8.8 1 V13.4" stroke="#f0f0f0" stroke-width="1" fill="none"/></svg>
<svg style="left:550px;top:78px" width="16" height="12" viewBox="0 0 16 12"><text x="-0.5" y="10" font-family="Liberation Sans" font-weight="bold" font-size="12.5" letter-spacing="-0.8" fill="#8cc0ff" stroke="#1050c0" stroke-width="1.5" paint-order="stroke">Aa</text></svg>
<svg style="left:573px;top:79px" width="13" height="13" viewBox="0 0 13 13"><rect x="0.8" y="9.2" width="2.6" height="2.6" rx="1" fill="#1860c8"/><path d="M8.4 1 V8 M5.2 2.8 L11.6 6.2 M11.6 2.8 L5.2 6.2" stroke="#1860c8" stroke-width="1.1"/></svg>
<div class="a" style="left:593px;top:72px;width:1px;height:25px;background:#a09d96"></div><div class="a" style="left:594px;top:72px;width:1px;height:25px;background:#fff"></div>
<div class="a" style="left:599px;top:79px;width:2px;height:2px;background:#fff"></div><div class="a" style="left:598px;top:78px;width:2px;height:2px;background:#606060"></div><div class="a" style="left:599px;top:79px;width:1px;height:1px;background:#b0b0b0"></div><div class="a" style="left:599px;top:83px;width:2px;height:2px;background:#fff"></div><div class="a" style="left:598px;top:82px;width:2px;height:2px;background:#606060"></div><div class="a" style="left:599px;top:83px;width:1px;height:1px;background:#b0b0b0"></div><div class="a" style="left:599px;top:87px;width:2px;height:2px;background:#fff"></div><div class="a" style="left:598px;top:86px;width:2px;height:2px;background:#606060"></div><div class="a" style="left:599px;top:87px;width:1px;height:1px;background:#b0b0b0"></div><div class="a" style="left:599px;top:91px;width:2px;height:2px;background:#fff"></div><div class="a" style="left:598px;top:90px;width:2px;height:2px;background:#606060"></div><div class="a" style="left:599px;top:91px;width:1px;height:1px;background:#b0b0b0"></div>
<svg style="left:609px;top:77px" width="11" height="16" viewBox="0 0 11 16"><path d="M1.5 1.5 L1.5 12.5 L4.2 10 L6.4 15 L8.4 14 L6.2 9.4 L10 9.4 Z" fill="#fff"/><path d="M0.5 0.5 L0.5 11.5 L3.2 9 L5.4 14 L7.4 13 L5.2 8.4 L9 8.4 Z" fill="#d4d0c8" stroke="#808080" stroke-width="1" stroke-linejoin="round"/></svg>
<div class="a" style="left:630px;top:75px;width:1px;height:18px;background:#808080"></div><div class="a" style="left:631px;top:75px;width:1px;height:18px;background:#fff"></div>
<svg style="left:638px;top:79px" width="18" height="11" viewBox="0 0 18 11"><rect x="1.5" y="1.5" width="15" height="8" fill="none" stroke="#fff"/><g transform="translate(1,1)" stroke="#fff" fill="#fff"></g><rect x="0.5" y="0.5" width="15" height="8" fill="none" stroke="#808080"/><g stroke="#808080" fill="#808080"></g></svg>
<div class="a" style="left:661px;top:75px;width:1px;height:18px;background:#808080"></div><div class="a" style="left:662px;top:75px;width:1px;height:18px;background:#fff"></div>
<svg style="left:669px;top:76px" width="16" height="15" viewBox="0 0 16 15"><rect x="1" y="1" width="15" height="14" fill="#fff"/><rect x="0.5" y="0.5" width="14" height="13" fill="#e4e1da" stroke="#808080"/><rect x="0" y="8" width="15" height="6" fill="#808080"/><path d="M1 1 L7.5 7.5 L14 1" fill="none" stroke="#808080"/></svg>
<svg style="left:693px;top:77px" width="16" height="15" viewBox="0 0 16 15"><rect x="1" y="1" width="14" height="14" fill="#fff"/><rect x="0.5" y="0.5" width="13" height="13" fill="#e4e1da" stroke="#808080"/><path d="M9 0 H14 V14 H9 Z" fill="#808080"/><path d="M9 0 L3.5 14" stroke="#808080" fill="none"/><path d="M6.4 5.5 H9 M5.4 8.5 H9 M4.4 11.5 H9" stroke="#808080" stroke-width="1" fill="none"/><path d="M6.8 6.5 H9 M5.8 9.5 H9" stroke="#e4e1da" stroke-width="1" fill="none"/></svg>
<div class="a" style="left:715px;top:75px;width:1px;height:18px;background:#808080"></div><div class="a" style="left:716px;top:75px;width:1px;height:18px;background:#fff"></div>
<svg style="left:723px;top:78px" width="18" height="12" viewBox="0 0 18 12"><rect x="1.5" y="1.5" width="15" height="9" fill="none" stroke="#fff"/><rect x="0.5" y="0.5" width="15" height="9" fill="none" stroke="#808080"/><rect x="2" y="3" width="14" height="7" fill="#808080"/></svg>
<svg style="left:746px;top:78px" width="18" height="12" viewBox="0 0 18 12"><rect x="1.5" y="1.5" width="15" height="9" fill="none" stroke="#fff"/><rect x="0.5" y="0.5" width="15" height="9" fill="none" stroke="#808080"/><rect x="3" y="0" width="13" height="6" fill="#808080"/></svg>
<svg style="left:769px;top:77px" width="18" height="14" viewBox="0 0 18 14"><rect x="1.5" y="1.5" width="15" height="11" fill="none" stroke="#fff"/><rect x="0.5" y="0.5" width="15" height="11" fill="none" stroke="#808080"/><rect x="3" y="3" width="13" height="7" fill="#808080"/></svg>
<svg style="left:793px;top:77px" width="16" height="16" viewBox="0 0 16 16"><rect x="1.5" y="1.5" width="13" height="13" fill="none" stroke="#fff"/><rect x="0.5" y="0.5" width="13" height="13" fill="none" stroke="#808080"/><rect x="2" y="2" width="10" height="10" fill="#808080"/></svg>
<div class="a" style="left:815px;top:75px;width:1px;height:18px;background:#808080"></div><div class="a" style="left:816px;top:75px;width:1px;height:18px;background:#fff"></div>
<svg style="left:823px;top:79px" width="18" height="11" viewBox="0 0 18 11"><rect x="1.5" y="1.5" width="15" height="8" fill="none" stroke="#fff"/><g transform="translate(1,1)" stroke="#fff" fill="#fff"><path d="M11 0.5 L15 4.5 L11 8.5" fill="none" stroke-width="1"/></g><rect x="0.5" y="0.5" width="15" height="8" fill="none" stroke="#808080"/><g stroke="#808080" fill="#808080"><path d="M11 0.5 L15 4.5 L11 8.5" fill="none" stroke-width="1"/></g></svg>
<svg style="left:846px;top:79px" width="18" height="11" viewBox="0 0 18 11"><rect x="1.5" y="1.5" width="15" height="8" fill="none" stroke="#fff"/><g transform="translate(1,1)" stroke="#fff" fill="#fff"><path d="M5 0.5 L1 4.5 L5 8.5" fill="none" stroke-width="1"/></g><rect x="0.5" y="0.5" width="15" height="8" fill="none" stroke="#808080"/><g stroke="#808080" fill="#808080"><path d="M5 0.5 L1 4.5 L5 8.5" fill="none" stroke-width="1"/></g></svg>
<svg style="left:869px;top:79px" width="18" height="11" viewBox="0 0 18 11"><rect x="1.5" y="1.5" width="15" height="8" fill="none" stroke="#fff"/><g transform="translate(1,1)" stroke="#fff" fill="#fff"><path d="M5 0.5 L1 4.5 L5 8.5 M11 0.5 L15 4.5 L11 8.5" fill="none" stroke-width="1"/></g><rect x="0.5" y="0.5" width="15" height="8" fill="none" stroke="#808080"/><g stroke="#808080" fill="#808080"><path d="M5 0.5 L1 4.5 L5 8.5 M11 0.5 L15 4.5 L11 8.5" fill="none" stroke-width="1"/></g></svg>
<div class="a" style="left:892px;top:75px;width:1px;height:18px;background:#808080"></div><div class="a" style="left:893px;top:75px;width:1px;height:18px;background:#fff"></div>
<svg style="left:900px;top:77px" width="17" height="17" viewBox="0 0 17 17"><g transform="translate(1,1)" fill="#fff" stroke="#fff"><circle cx="5.5" cy="5.5" r="4.6" fill="none" stroke-width="1.1"/><path d="M3.5 5.5 H7.5 M5.5 3.5 V7.5" stroke-width="1.1" fill="none"/><path d="M9 9 L15 14.5" stroke-width="1.8" fill="none"/></g><g fill="#808080" stroke="#808080"><circle cx="5.5" cy="5.5" r="4.6" fill="none" stroke-width="1.1"/><path d="M3.5 5.5 H7.5 M5.5 3.5 V7.5" stroke-width="1.1" fill="none"/><path d="M9 9 L15 14.5" stroke-width="1.8" fill="none"/></g></svg>
<svg style="left:923px;top:77px" width="17" height="17" viewBox="0 0 17 17"><g transform="translate(1,1)" fill="#fff" stroke="#fff"><circle cx="5.5" cy="5.5" r="4.6" fill="none" stroke-width="1.1"/><path d="M3.5 5.5 H7.5 " stroke-width="1.1" fill="none"/><path d="M9 9 L15 14.5" stroke-width="1.8" fill="none"/></g><g fill="#808080" stroke="#808080"><circle cx="5.5" cy="5.5" r="4.6" fill="none" stroke-width="1.1"/><path d="M3.5 5.5 H7.5 " stroke-width="1.1" fill="none"/><path d="M9 9 L15 14.5" stroke-width="1.8" fill="none"/></g></svg>
<div class="a" style="left:946px;top:75px;width:1px;height:18px;background:#808080"></div><div class="a" style="left:947px;top:75px;width:1px;height:18px;background:#fff"></div>
<span class="t" style="left:957px;top:76px;-webkit-text-stroke:0.5px currentColor;font-family:'Liberation Serif',serif;font-weight:bold;font-size:19px;line-height:19px;height:19px;color:#fff">S</span><span class="t" style="left:956px;top:75px;-webkit-text-stroke:0.5px currentColor;font-family:'Liberation Serif',serif;font-weight:bold;font-size:19px;line-height:19px;height:19px;color:#808080">S</span>
<span class="t" style="left:978px;top:74px;-webkit-text-stroke:0.15px currentColor;font-family:'Liberation Serif',serif;font-weight:normal;font-size:22px;line-height:22px;height:22px;color:#fff">C</span><span class="t" style="left:977px;top:73px;-webkit-text-stroke:0.15px currentColor;font-family:'Liberation Serif',serif;font-weight:normal;font-size:22px;line-height:22px;height:22px;color:#808080">C</span>
<div class="a" style="left:997px;top:72px;width:1px;height:25px;background:#a09d96"></div><div class="a" style="left:998px;top:72px;width:1px;height:25px;background:#fff"></div>
<div class="a" style="left:1003px;top:79px;width:2px;height:2px;background:#fff"></div><div class="a" style="left:1002px;top:78px;width:2px;height:2px;background:#606060"></div><div class="a" style="left:1003px;top:79px;width:1px;height:1px;background:#b0b0b0"></div><div class="a" style="left:1003px;top:83px;width:2px;height:2px;background:#fff"></div><div class="a" style="left:1002px;top:82px;width:2px;height:2px;background:#606060"></div><div class="a" style="left:1003px;top:83px;width:1px;height:1px;background:#b0b0b0"></div><div class="a" style="left:1003px;top:87px;width:2px;height:2px;background:#fff"></div><div class="a" style="left:1002px;top:86px;width:2px;height:2px;background:#606060"></div><div class="a" style="left:1003px;top:87px;width:1px;height:1px;background:#b0b0b0"></div><div class="a" style="left:1003px;top:91px;width:2px;height:2px;background:#fff"></div><div class="a" style="left:1002px;top:90px;width:2px;height:2px;background:#606060"></div><div class="a" style="left:1003px;top:91px;width:1px;height:1px;background:#b0b0b0"></div>
<div class="a" style="left:1008px;top:74px;width:130px;height:21px;box-sizing:border-box;background:#fff;border:1px solid;border-color:#808080 #fff #fff #808080"></div><div class="a" style="left:1009px;top:75px;width:128px;height:19px;box-sizing:border-box;background:#fff;border:1px solid;border-color:#404040 #d4d0c8 #d4d0c8 #404040"></div><div class="a sb" style="left:1120px;top:76px;width:16px;height:17px"></div><svg style="left:1124px;top:82px" width="7" height="4" viewBox="0 0 7 4"><path d="M0 0 L7 0 L3.5 3.8 Z" fill="#000"/></svg>
<svg style="left:1141px;top:76px" width="17" height="16" viewBox="0 0 17 16"><rect x="1" y="10" width="10" height="5.4" fill="#fff" stroke="#c8d0e8" stroke-width="0.6"/><path d="M10.6 10.2 L14.8 14.4" stroke="#d08010" stroke-width="3.2" stroke-linecap="round"/><path d="M10.8 10 L14.8 14" stroke="#ffc040" stroke-width="1.5" stroke-linecap="round"/><circle cx="5.6" cy="5.4" r="4.9" fill="#d8f0fb" stroke="#9cc4e4" stroke-width="1.1"/><circle cx="4.6" cy="4.4" r="2.6" fill="#f2fbff"/><rect x="2" y="11.6" width="2.2" height="2.2" fill="#000"/><rect x="5.2" y="11.6" width="2.2" height="2.2" fill="#000"/><rect x="8.4" y="11.6" width="2.2" height="2.2" fill="#000"/></svg>
<svg style="left:1163px;top:76px" width="17" height="17" viewBox="0 0 17 17"><path d="M10.7 8.1 L16.8 12.5 L13.7 15.7 L9.4 10.7 Z" fill="#e02c2c" stroke="#b01c1c" stroke-width="0.8" stroke-linejoin="round"/><path d="M3.1 5.6 A3.7 3.7 0 1 0 7 1.3" fill="none" stroke="#5c5c5c" stroke-width="3.6" stroke-linecap="round"/><path d="M3.1 5.6 A3.7 3.7 0 1 0 7 1.3" fill="none" stroke="#bcbcbc" stroke-width="1.9" stroke-linecap="round"/></svg>
<div class="a" style="left:1184px;top:72px;width:1px;height:25px;background:#a09d96"></div><div class="a" style="left:1185px;top:72px;width:1px;height:25px;background:#fff"></div>
</div>

<!-- LEFT PANEL placeholder -->
<div id="left">
<!-- caption -->
<div class="a" style="left:0;top:96px;width:179px;height:1px;background:#9d9a93"></div>
<div class="a" style="left:0;top:97px;width:179px;height:18px;background:linear-gradient(to bottom,#aeaba3,#c9c6be)"></div>
<span class="t" style="left:-20.44px;top:100px;font-size:12px;transform-origin:0 0;transform:scaleX(0.900)">Management</span>
<svg style="left:165px;top:102px" width="9" height="9" viewBox="0 0 9 9"><path d="M0.5 0.5 L8.5 8.5 M8.5 0.5 L0.5 8.5" stroke="#000" stroke-width="1.6" fill="none"/></svg>
<div class="a" style="left:0;top:115px;width:178px;height:1px;background:#808080"></div>
<div class="a" style="left:0;top:116px;width:178px;height:1px;background:#404040"></div>
<!-- notebook tab strip -->
<div class="a" style="left:0;top:117px;width:176px;height:22px;background:linear-gradient(to bottom,#b4b1aa,#efeeea)"></div>
<div class="a" style="left:61px;top:121px;width:65px;height:17px;background:linear-gradient(to bottom,#e2dfd8 0,#e2dfd8 48%,#d2cfc7 52%,#d2cfc7 100%);border:1px solid #a09d96;border-bottom:none;border-radius:3px 3px 0 0;box-sizing:border-box;box-shadow:inset 1px 1px 0 #efede8,inset -1px 0 0 #efede8"></div>
<div class="a" style="left:125px;top:121px;width:35px;height:17px;background:linear-gradient(to bottom,#e2dfd8 0,#e2dfd8 48%,#d2cfc7 52%,#d2cfc7 100%);border:1px solid #a09d96;border-bottom:none;border-right:none;border-radius:3px 0 0 0;box-sizing:border-box;box-shadow:inset 1px 1px 0 #efede8"></div>
<div class="a" style="left:-3px;top:121px;width:64px;height:19px;background:linear-gradient(to bottom,#fff 0,#fff 45%,#e4e1da 100%);border:1px solid #a09d96;border-bottom:none;border-radius:3px 3px 0 0;box-sizing:border-box"></div>
<span class="t b" style="left:6.00px;top:125px;font-size:12px;transform-origin:0 0;transform:scaleX(0.971)">Projects</span>
<span class="t" style="left:68.70px;top:125px;font-size:12px;transform-origin:0 0;transform:scaleX(0.839)">Symbols</span>
<span class="t" style="left:132.70px;top:125px;font-size:12px;transform-origin:0 0;transform:scaleX(0.817)">Files</span>
<svg style="left:164px;top:126px" width="6" height="9" viewBox="0 0 6 9"><path d="M0 0 L6 4.5 L0 9 Z" fill="#000"/></svg>
<div class="a" style="left:61px;top:139px;width:115px;height:1px;background:#a09d96"></div><div class="a" style="left:0;top:140px;width:176px;height:1px;background:#e2dfd8"></div>
<div class="a" style="left:0;top:141px;width:176px;height:1px;background:#d4d0c8"></div><div class="a" style="left:0;top:142px;width:176px;height:1px;background:#a09d96"></div>
<!-- tree -->
<div class="a" style="left:0;top:143px;width:176px;height:813px;background:#fff"></div>
<div class="a" style="left:176px;top:117px;width:1px;height:839px;background:#a09d96"></div>
<div class="a" style="left:177px;top:117px;width:1px;height:839px;background:#e8e6e1"></div>
<div class="a" style="left:178px;top:117px;width:1px;height:839px;background:#fff"></div>
<div class="a" style="left:179px;top:97px;width:1px;height:859px;background:#a09d96"></div>
<span class="t" style="left:2.90px;top:145px;font-size:12px;transform-origin:0 0;transform:scaleX(0.873)">Workspace</span>
<div class="a" style="left:1px;top:159px;width:16px;height:16px;background:#404040"></div>
<div class="a" style="left:1px;top:159px;width:7px;height:7px;background:#ff0000"></div>
<div class="a" style="left:9px;top:159px;width:7px;height:7px;background:#00ff00"></div>
<div class="a" style="left:1px;top:167px;width:7px;height:7px;background:#ffff00"></div>
<div class="a" style="left:9px;top:167px;width:7px;height:7px;background:#0000ff"></div>
<div class="a" style="left:8px;top:159px;width:1px;height:8px;background:#404040"></div>
<div class="a" style="left:16px;top:159px;width:1px;height:16px;background:#a0a0a0"></div>
<div class="a" style="left:1px;top:174px;width:16px;height:1px;background:#a0a0a0"></div>
<span class="t b" style="left:22.20px;top:161px;font-size:12px;transform-origin:0 0;transform:scaleX(0.878)">01</span>
<div class="a" style="left:5px;top:179px;width:9px;height:9px;border:1px solid #808080;box-sizing:border-box;background:#fff"></div>
<div class="a" style="left:7px;top:183px;width:5px;height:1px;background:#000"></div>
<div class="a" style="left:9px;top:181px;width:1px;height:5px;background:#000"></div>
<div class="a" style="left:9px;top:176px;width:1px;height:1px;background:#808080"></div><div class="a" style="left:9px;top:178px;width:1px;height:1px;background:#808080"></div>
<div class="a" style="left:15px;top:183px;width:1px;height:1px;background:#808080"></div><div class="a" style="left:17px;top:183px;width:1px;height:1px;background:#808080"></div><div class="a" style="left:19px;top:183px;width:1px;height:1px;background:#808080"></div>
<svg style="left:20px;top:177px" width="17" height="12" viewBox="0 0 17 12"><path d="M0.7 10.5 L0.7 1.5 Q0.7 0.6 1.6 0.6 L5 0.6 L6.2 2 L12 2 Q12.6 2 12.6 2.8 L12.6 4.5 L4.5 4.5 Z" fill="#1f6fe0" stroke="#0c48b8" stroke-width="0.9"/><path d="M1.2 11 L4.2 4.6 L16 4.6 L12.2 11 Z" fill="#5aa6f6" stroke="#0c48b8" stroke-width="0.9" stroke-linejoin="round"/><path d="M4.6 5.4 L14.6 5.4 L13.2 7.6 L3.6 7.6 Z" fill="#c4e0ff"/><path d="M2.4 10.4 L11.8 10.4 L12.6 9.2 L3 9.2 Z" fill="#f4e8d8"/></svg>
<span class="t" style="left:40.90px;top:176px;font-size:12px;transform-origin:0 0;transform:scaleX(0.850)">Sources</span>
</div>

<!-- EDITOR placeholder -->
<div id="editor">
<div class="a" style="left:184px;top:97px;width:1px;height:690px;background:#a09d96"></div>
<div class="a" style="left:185px;top:97px;width:1061px;height:2px;background:#95928b"></div>
<div class="a" style="left:185px;top:97px;width:1px;height:688px;background:#808080"></div>
<div class="a" style="left:186px;top:99px;width:1060px;height:1px;background:#404040"></div>
<div class="a" style="left:186px;top:99px;width:1px;height:685px;background:#404040"></div>
<div class="a" style="left:187px;top:100px;width:1059px;height:22px;background:linear-gradient(to bottom,#bdbab3,#efeeea)"></div>
<div class="a" style="left:193px;top:104px;width:73px;height:19px;background:linear-gradient(to bottom,#fff 0,#fff 45%,#e6e3dc 100%);border:1px solid #a09d96;border-bottom:none;border-radius:4px 4px 0 0;box-sizing:border-box"></div>
<span class="t b" style="left:200.80px;top:108px;font-size:12px;transform-origin:0 0;transform:scaleX(0.944)">main.c</span>
<svg style="left:251px;top:110px" width="9" height="9" viewBox="0 0 9 9"><path d="M0.5 0.5 L8.5 8.5 M8.5 0.5 L0.5 8.5" stroke="#606060" stroke-width="1.2" fill="none"/></svg>
<div class="a" style="left:187px;top:122px;width:6px;height:1px;background:#a09d96"></div><div class="a" style="left:266px;top:122px;width:980px;height:1px;background:#a09d96"></div>
<div class="a" style="left:187px;top:123px;width:1059px;height:1px;background:#e6e3dc"></div><div class="a" style="left:187px;top:124px;width:1059px;height:1px;background:#d4d0c8"></div><div class="a" style="left:187px;top:125px;width:1059px;height:1px;background:#a09d96"></div>
<div class="a" style="left:187px;top:123px;width:1px;height:661px;background:#a09d96"></div><div class="a" style="left:188px;top:126px;width:1058px;height:1px;background:#808080"></div>
<div class="a" style="left:188px;top:126px;width:1px;height:655px;background:#808080"></div>
<div class="a" style="left:189px;top:127px;width:1057px;height:1px;background:#404040"></div>
<div class="a" style="left:189px;top:127px;width:1px;height:654px;background:#404040"></div>
<div class="a" style="left:190px;top:128px;width:1056px;height:637px;background:#fff"></div>
<div class="a" style="left:190px;top:128px;width:70px;height:637px;background:#d4d0c8"></div>
<div class="a" style="left:260px;top:128px;width:20px;height:637px;background:#fff;background-image:linear-gradient(45deg,#d4d0c8 25%,transparent 25%,transparent 75%,#d4d0c8 75%),linear-gradient(45deg,#d4d0c8 25%,transparent 25%,transparent 75%,#d4d0c8 75%);background-size:2px 2px;background-position:0 0,1px 1px"></div>
<span class="ln" style="top:130px">1</span>
<span class="code" style="top:130px"><span class="g">#include &lt;stdio.h&gt;</span></span>
<span class="ln" style="top:147px">2</span>
<span class="code" style="top:147px"><span class="g">#include &lt;stdlib.h&gt;</span></span>
<span class="ln" style="top:164px">3</span>
<span class="ln" style="top:181px">4</span>
<span class="code" style="top:181px"><span class="k">int</span> main<span class="r">()</span></span>
<span class="ln" style="top:198px">5</span>
<span class="code" style="top:198px"><span class="r">{</span></span>
<span class="ln" style="top:215px">6</span>
<span class="code" style="top:215px">    <span class="k">int</span> a<span class="r">=</span> <span class="n">1</span><span class="r">;</span></span>
<span class="ln" style="top:232px">7</span>
<span class="code" style="top:232px">    printf<span class="r">(</span><span class="s">"a= %d"</span><span class="r">,</span>a<span class="r">);</span></span>
<span class="ln" style="top:249px">8</span>
<span class="code" style="top:249px">    scanf<span class="r">(</span><span class="s">"%d"</span><span class="r">,</span>a<span class="r">);</span></span>
<span class="ln" style="top:266px">9</span>
<span class="code" style="top:266px">    printf<span class="r">(</span><span class="s">"a=%d"</span><span class="r">,</span> a<span class="r">);</span></span>
<span class="ln" style="top:283px">10</span>
<span class="code" style="top:283px">    <span class="k">return</span> <span class="n">0</span><span class="r">;</span></span>
<span class="ln" style="top:300px">11</span>
<span class="code" style="top:300px"><span class="r">}</span></span>
<span class="ln" style="top:317px">12</span>
<div class="a" style="left:266px;top:198px;width:13px;height:13px;box-sizing:border-box;border:1px solid #808080;border-radius:1px;background:#fff"></div>
<div class="a" style="left:269px;top:204px;width:7px;height:1px;background:#808080"></div>
<div class="a" style="left:272px;top:211px;width:1px;height:113px;background:#808080"></div>
<div class="a" style="left:272px;top:323px;width:7px;height:1px;background:#808080"></div>
<div class="a" style="left:190px;top:765px;width:1056px;height:16px;background:#fff;background-image:linear-gradient(45deg,#d4d0c8 25%,transparent 25%,transparent 75%,#d4d0c8 75%),linear-gradient(45deg,#d4d0c8 25%,transparent 25%,transparent 75%,#d4d0c8 75%);background-size:2px 2px;background-position:0 0,1px 1px"></div>
<div class="a sb" style="left:190px;top:765px;width:16px;height:16px"></div>
<div class="a sb" style="left:206px;top:765px;width:500px;height:16px"></div>
<div class="a sb" style="left:1236px;top:765px;width:16px;height:16px"></div>
<svg style="left:195px;top:769px" width="4" height="7" viewBox="0 0 4 7"><path d="M4 0 L0 3.5 L4 7 Z" fill="#000"/></svg>
<svg style="left:1242px;top:769px" width="4" height="7" viewBox="0 0 4 7"><path d="M0 0 L4 3.5 L0 7 Z" fill="#000"/></svg>
<div class="a" style="left:188px;top:781px;width:1058px;height:1px;background:#eceae5"></div>
<div class="a" style="left:187px;top:782px;width:1059px;height:1px;background:#fff"></div>
<div class="a" style="left:187px;top:783px;width:1059px;height:1px;background:#a09d96"></div>
<div class="a" style="left:185px;top:784px;width:1061px;height:1px;background:#eceae5"></div><div class="a" style="left:184px;top:785px;width:1062px;height:1px;background:#fff"></div>
</div>

<!-- LOGS placeholder -->
<div id="logs">
<div class="a" style="left:184px;top:786px;width:1062px;height:1px;background:#a09d96"></div>
<div class="a" style="left:184px;top:791px;width:1062px;height:1px;background:#a09d96"></div>
<div class="a" style="left:184px;top:792px;width:1062px;height:17px;background:linear-gradient(to bottom,#b3b0a9,#cfccc4)"></div>
<span class="t" style="left:187.70px;top:794px;font-size:12px;transform-origin:0 0;transform:scaleX(0.891)">Logs &amp; others</span>
<svg style="left:1242px;top:796px" width="9" height="9" viewBox="0 0 9 9"><path d="M0.5 0.5 L8.5 8.5 M8.5 0.5 L0.5 8.5" stroke="#000" stroke-width="1.6" fill="none"/></svg>
<div class="a" style="left:185px;top:809px;width:1061px;height:1px;background:#808080"></div>
<div class="a" style="left:185px;top:809px;width:1px;height:147px;background:#808080"></div>
<div class="a" style="left:186px;top:810px;width:1060px;height:1px;background:#404040"></div>
<div class="a" style="left:186px;top:810px;width:1px;height:146px;background:#404040"></div>
<div class="a" style="left:187px;top:811px;width:1059px;height:25px;background:linear-gradient(to bottom,#bab7b0,#f4f3f0)"></div>
<svg style="left:192px;top:821px" width="5" height="9" viewBox="0 0 5 9"><path d="M5 0 L0 4.5 L5 9 Z" fill="#808080"/></svg>
<div class="a" style="left:204px;top:815px;width:125px;height:21px;background:linear-gradient(to bottom,#e4e1da 0,#e4e1da 48%,#d2cfc7 52%,#d2cfc7 100%);border:1px solid #a09d96;border-bottom:none;border-radius:3px 3px 0 0;box-sizing:border-box;box-shadow:inset 1px 1px 0 #efede8,inset -1px 0 0 #efede8"></div>
<svg style="left:212px;top:818px" width="13" height="16" viewBox="0 0 13 16"><rect x="0.5" y="1.5" width="11" height="14" fill="#fdfdff" stroke="#b8c4e0" stroke-width="1"/><rect x="1" y="14" width="11" height="2" fill="#c0c8e0"/><path d="M9.2 0 L11.8 1.2 L5.2 12.2 L2.8 13.8 L2.6 11 Z" fill="#ffa000"/><path d="M9.2 0 L10.4 0.6 L3.8 11.8 L2.6 11 Z" fill="#ffd040"/><path d="M9.2 0 L11.8 1.2 L11 2.6 L8.4 1.4 Z" fill="#e05020"/><path d="M2.6 11 L5.2 12.2 L2.8 13.8 Z" fill="#a05030"/></svg>
<span class="t" style="left:230.80px;top:820px;font-size:12px;transform-origin:0 0;transform:scaleX(0.866)">Code::Blocks</span>
<svg style="left:314px;top:821px" width="9" height="9" viewBox="0 0 9 9"><path d="M0.5 0.5 L8.5 8.5 M8.5 0.5 L0.5 8.5" stroke="#606060" stroke-width="1.2" fill="none"/></svg>
<div class="a" style="left:328px;top:815px;width:136px;height:21px;background:linear-gradient(to bottom,#e4e1da 0,#e4e1da 48%,#d2cfc7 52%,#d2cfc7 100%);border:1px solid #a09d96;border-bottom:none;border-radius:3px 3px 0 0;box-sizing:border-box;box-shadow:inset 1px 1px 0 #efede8,inset -1px 0 0 #efede8"></div>
<svg style="left:336px;top:818px" width="16" height="16" viewBox="0 0 16 16"><path d="M9.5 9.5 L14 14" stroke="#c89020" stroke-width="3" stroke-linecap="round"/><circle cx="6" cy="6" r="5" fill="#cfe6fa" stroke="#6090c0" stroke-width="1.3"/><path d="M3 5 A3.5 3.5 0 0 1 7 2.6" stroke="#fff" stroke-width="1.3" fill="none"/></svg>
<span class="t" style="left:355.00px;top:820px;font-size:12px;transform-origin:0 0;transform:scaleX(0.874)">Search results</span>
<svg style="left:449px;top:821px" width="9" height="9" viewBox="0 0 9 9"><path d="M0.5 0.5 L8.5 8.5 M8.5 0.5 L0.5 8.5" stroke="#606060" stroke-width="1.2" fill="none"/></svg>
<div class="a" style="left:463px;top:815px;width:80px;height:21px;background:linear-gradient(to bottom,#e4e1da 0,#e4e1da 48%,#d2cfc7 52%,#d2cfc7 100%);border:1px solid #a09d96;border-bottom:none;border-radius:3px 3px 0 0;box-sizing:border-box;box-shadow:inset 1px 1px 0 #efede8,inset -1px 0 0 #efede8"></div>
<svg style="left:471px;top:818px" width="13" height="16" viewBox="0 0 13 16"><rect x="0.5" y="1.5" width="11" height="14" fill="#fdfdff" stroke="#b8c4e0" stroke-width="1"/><rect x="1" y="14" width="11" height="2" fill="#c0c8e0"/><path d="M9.2 0 L11.8 1.2 L5.2 12.2 L2.8 13.8 L2.6 11 Z" fill="#ffa000"/><path d="M9.2 0 L10.4 0.6 L3.8 11.8 L2.6 11 Z" fill="#ffd040"/><path d="M9.2 0 L11.8 1.2 L11 2.6 L8.4 1.4 Z" fill="#e05020"/><path d="M2.6 11 L5.2 12.2 L2.8 13.8 Z" fill="#a05030"/></svg>
<span class="t" style="left:490.00px;top:820px;font-size:12px;transform-origin:0 0;transform:scaleX(0.788)">Cccc</span>
<svg style="left:528px;top:821px" width="9" height="9" viewBox="0 0 9 9"><path d="M0.5 0.5 L8.5 8.5 M8.5 0.5 L0.5 8.5" stroke="#606060" stroke-width="1.2" fill="none"/></svg>
<div class="a" style="left:542px;top:815px;width:102px;height:22px;background:linear-gradient(to bottom,#fff 0,#fff 45%,#e6e3dc 100%);border:1px solid #a09d96;border-bottom:none;border-radius:3px 3px 0 0;box-sizing:border-box"></div>
<svg style="left:551px;top:819px" width="14" height="14" viewBox="0 0 14 14"><g transform="rotate(28 7 7)"><ellipse cx="7" cy="7" rx="6.3" ry="5.7" fill="none" stroke="#0a50c8" stroke-width="1.6" stroke-dasharray="2.4 1.6"/><ellipse cx="7" cy="7" rx="5.6" ry="5" fill="#0c7ce8"/><ellipse cx="7" cy="7" rx="4.6" ry="3.9" fill="none" stroke="#28b8f8" stroke-width="0.9"/><ellipse cx="7.2" cy="6.6" rx="3.3" ry="2" fill="#fff"/></g></svg>
<span class="t b" style="left:569.00px;top:820px;font-size:12px;transform-origin:0 0;transform:scaleX(0.902)">Build log</span>
<svg style="left:629px;top:821px" width="9" height="9" viewBox="0 0 9 9"><path d="M0.5 0.5 L8.5 8.5 M8.5 0.5 L0.5 8.5" stroke="#606060" stroke-width="1.2" fill="none"/></svg>
<div class="a" style="left:643px;top:815px;width:141px;height:21px;background:linear-gradient(to bottom,#e4e1da 0,#e4e1da 48%,#d2cfc7 52%,#d2cfc7 100%);border:1px solid #a09d96;border-bottom:none;border-radius:3px 3px 0 0;box-sizing:border-box;box-shadow:inset 1px 1px 0 #efede8,inset -1px 0 0 #efede8"></div>
<svg style="left:651px;top:818px" width="15" height="16" viewBox="0 0 15 16"><path d="M1.4 4.8 L7.2 15.4" stroke="#d89820" stroke-width="1.9" stroke-linecap="round"/><path d="M3 5.2 L5.4 4.2 L6 1.2 L7.8 0.2 L11.4 0.3 L12.6 2 L13 4 L14.4 5.5 L11 5.7 L9.8 7.6 L8.6 8.2 L8 10.6 L6 11 Z" fill="#f01818" stroke="#c00c0c" stroke-width="0.6" stroke-linejoin="round"/><path d="M7 2 L10.6 1.6 L11.4 3.6 L9.4 5 L7.4 5.4 L6.6 3.4 Z" fill="#ff9c9c"/></svg>
<span class="t" style="left:670.00px;top:820px;font-size:12px;transform-origin:0 0;transform:scaleX(0.845)">Build messages</span>
<svg style="left:770px;top:821px" width="9" height="9" viewBox="0 0 9 9"><path d="M0.5 0.5 L8.5 8.5 M8.5 0.5 L0.5 8.5" stroke="#606060" stroke-width="1.2" fill="none"/></svg>
<div class="a" style="left:783px;top:815px;width:111px;height:21px;background:linear-gradient(to bottom,#e4e1da 0,#e4e1da 48%,#d2cfc7 52%,#d2cfc7 100%);border:1px solid #a09d96;border-bottom:none;border-radius:3px 3px 0 0;box-sizing:border-box;box-shadow:inset 1px 1px 0 #efede8,inset -1px 0 0 #efede8"></div>
<svg style="left:792px;top:818px" width="13" height="16" viewBox="0 0 13 16"><rect x="0.5" y="1.5" width="11" height="14" fill="#fdfdff" stroke="#b8c4e0" stroke-width="1"/><rect x="1" y="14" width="11" height="2" fill="#c0c8e0"/><path d="M9.2 0 L11.8 1.2 L5.2 12.2 L2.8 13.8 L2.6 11 Z" fill="#ffa000"/><path d="M9.2 0 L10.4 0.6 L3.8 11.8 L2.6 11 Z" fill="#ffd040"/><path d="M9.2 0 L11.8 1.2 L11 2.6 L8.4 1.4 Z" fill="#e05020"/><path d="M2.6 11 L5.2 12.2 L2.8 13.8 Z" fill="#a05030"/></svg>
<span class="t" style="left:810.00px;top:820px;font-size:12px;transform-origin:0 0;transform:scaleX(0.852)">CppCheck</span>
<svg style="left:879px;top:821px" width="9" height="9" viewBox="0 0 9 9"><path d="M0.5 0.5 L8.5 8.5 M8.5 0.5 L0.5 8.5" stroke="#606060" stroke-width="1.2" fill="none"/></svg>
<div class="a" style="left:893px;top:815px;width:170px;height:21px;background:linear-gradient(to bottom,#e4e1da 0,#e4e1da 48%,#d2cfc7 52%,#d2cfc7 100%);border:1px solid #a09d96;border-bottom:none;border-radius:3px 3px 0 0;box-sizing:border-box;box-shadow:inset 1px 1px 0 #efede8,inset -1px 0 0 #efede8"></div>
<svg style="left:901px;top:818px" width="13" height="16" viewBox="0 0 13 16"><rect x="0.5" y="1.5" width="11" height="14" fill="#fdfdff" stroke="#b8c4e0" stroke-width="1"/><rect x="1" y="14" width="11" height="2" fill="#c0c8e0"/><path d="M9.2 0 L11.8 1.2 L5.2 12.2 L2.8 13.8 L2.6 11 Z" fill="#ffa000"/><path d="M9.2 0 L10.4 0.6 L3.8 11.8 L2.6 11 Z" fill="#ffd040"/><path d="M9.2 0 L11.8 1.2 L11 2.6 L8.4 1.4 Z" fill="#e05020"/><path d="M2.6 11 L5.2 12.2 L2.8 13.8 Z" fill="#a05030"/></svg>
<span class="t" style="left:919.00px;top:820px;font-size:12px;transform-origin:0 0;transform:scaleX(0.859)">CppCheck messages</span>
<svg style="left:1048px;top:821px" width="9" height="9" viewBox="0 0 9 9"><path d="M0.5 0.5 L8.5 8.5 M8.5 0.5 L0.5 8.5" stroke="#606060" stroke-width="1.2" fill="none"/></svg>
<div class="a" style="left:1062px;top:815px;width:95px;height:21px;background:linear-gradient(to bottom,#e4e1da 0,#e4e1da 48%,#d2cfc7 52%,#d2cfc7 100%);border:1px solid #a09d96;border-bottom:none;border-radius:3px 3px 0 0;box-sizing:border-box;box-shadow:inset 1px 1px 0 #efede8,inset -1px 0 0 #efede8"></div>
<svg style="left:1070px;top:818px" width="13" height="16" viewBox="0 0 13 16"><rect x="0.5" y="1.5" width="11" height="14" fill="#fdfdff" stroke="#b8c4e0" stroke-width="1"/><rect x="1" y="14" width="11" height="2" fill="#c0c8e0"/><path d="M9.2 0 L11.8 1.2 L5.2 12.2 L2.8 13.8 L2.6 11 Z" fill="#ffa000"/><path d="M9.2 0 L10.4 0.6 L3.8 11.8 L2.6 11 Z" fill="#ffd040"/><path d="M9.2 0 L11.8 1.2 L11 2.6 L8.4 1.4 Z" fill="#e05020"/><path d="M2.6 11 L5.2 12.2 L2.8 13.8 Z" fill="#a05030"/></svg>
<span class="t" style="left:1088.00px;top:820px;font-size:12px;transform-origin:0 0;transform:scaleX(0.853)">Cscope</span>
<svg style="left:1142px;top:821px" width="9" height="9" viewBox="0 0 9 9"><path d="M0.5 0.5 L8.5 8.5 M8.5 0.5 L0.5 8.5" stroke="#606060" stroke-width="1.2" fill="none"/></svg>
<div class="a" style="left:1156px;top:815px;width:95px;height:21px;background:linear-gradient(to bottom,#e4e1da 0,#e4e1da 48%,#d2cfc7 52%,#d2cfc7 100%);border:1px solid #a09d96;border-bottom:none;border-radius:3px 3px 0 0;box-sizing:border-box;box-shadow:inset 1px 1px 0 #efede8,inset -1px 0 0 #efede8"></div>
<svg style="left:1165px;top:819px" width="14" height="14" viewBox="0 0 14 14"><g transform="rotate(28 7 7)"><ellipse cx="7" cy="7" rx="6.3" ry="5.7" fill="none" stroke="#0a50c8" stroke-width="1.6" stroke-dasharray="2.4 1.6"/><ellipse cx="7" cy="7" rx="5.6" ry="5" fill="#0c7ce8"/><ellipse cx="7" cy="7" rx="4.6" ry="3.9" fill="none" stroke="#28b8f8" stroke-width="0.9"/><ellipse cx="7.2" cy="6.6" rx="3.3" ry="2" fill="#fff"/></g></svg>
<span class="t" style="left:1182.00px;top:820px;font-size:12px;transform-origin:0 0;transform:scaleX(0.892)">Debugger</span>
<div class="a" style="left:1237px;top:811px;width:9px;height:25px;background:linear-gradient(to bottom,#bab7b0,#f4f3f0)"></div>
<svg style="left:1242px;top:821px" width="5" height="9" viewBox="0 0 5 9"><path d="M0 0 L5 4.5 L0 9 Z" fill="#000"/></svg>
<div class="a" style="left:187px;top:836px;width:356px;height:1px;background:#a09d96"></div><div class="a" style="left:643px;top:836px;width:603px;height:1px;background:#a09d96"></div>
<div class="a" style="left:187px;top:837px;width:1059px;height:1px;background:#e6e3dc"></div><div class="a" style="left:187px;top:838px;width:1059px;height:1px;background:#d4d0c8"></div><div class="a" style="left:187px;top:839px;width:1059px;height:1px;background:#a09d96"></div>
<div class="a" style="left:184px;top:809px;width:1px;height:147px;background:#a09d96"></div><div class="a" style="left:187px;top:837px;width:1px;height:119px;background:#a09d96"></div><div class="a" style="left:188px;top:840px;width:1058px;height:1px;background:#808080"></div>
<div class="a" style="left:188px;top:840px;width:1px;height:116px;background:#808080"></div>
<div class="a" style="left:189px;top:841px;width:1057px;height:1px;background:#404040"></div>
<div class="a" style="left:189px;top:841px;width:1px;height:115px;background:#404040"></div>
<div class="a" style="left:190px;top:842px;width:1056px;height:112px;background:#fff"></div>
<div class="a" style="left:190px;top:954px;width:1056px;height:1px;background:#d4d0c8"></div>
<div class="a" style="left:190px;top:955px;width:1056px;height:1px;background:#fff"></div>
</div>

</body></html>
